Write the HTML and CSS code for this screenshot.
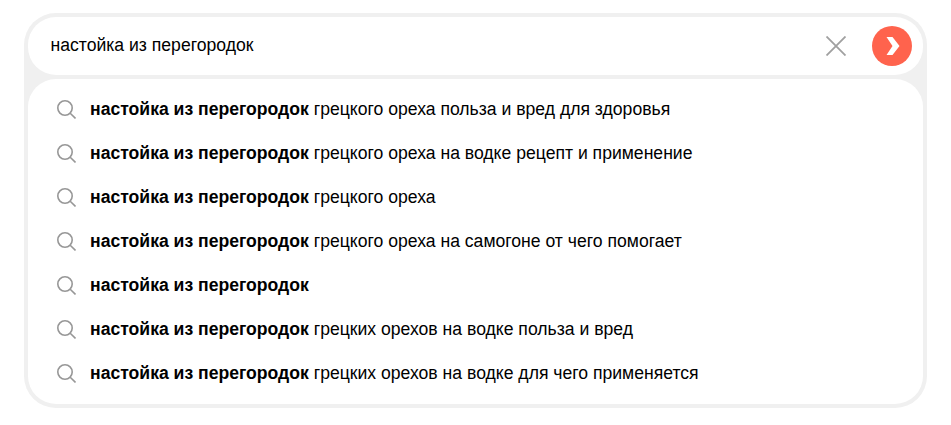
FILE: index.html
```html
<!DOCTYPE html>
<html lang="ru">
<head>
    <meta charset="UTF-8">
    <meta name="viewport" content="width=device-width, initial-scale=1.0">
    <title>Поиск</title>
    <link rel="stylesheet" href="styles.css">
</head>
<body>
    <div class="search-box">
        <div class="search-bar">
            <span class="query">настойка из перегородок</span>
            <svg class="clear-icon" width="20" height="20" viewBox="0 0 20 20">
                <path d="M0.5 0.5L19.5 19.5M19.5 0.5L0.5 19.5" stroke="#a0a0a0" stroke-width="1.8" fill="none"/>
            </svg>
            <div class="go-btn">
                <svg width="14" height="18" viewBox="0 0 14 18">
                    <path d="M0.5 0H6.5L13.5 9L6.5 18H0.5L6.5 9Z" fill="#fff"/>
                </svg>
            </div>
        </div>

        <!-- подсказки -->
        <ul class="suggest">
            <li class="suggest-row">
                <svg class="loupe" width="20" height="20" viewBox="0 0 20 20"><circle cx="9" cy="9" r="7.2"/><path d="M14.2 14.2L19.5 19.5"/></svg>
                <span><b>настойка из перегородок</b> грецкого ореха польза и вред для здоровья</span>
            </li>
            <li class="suggest-row">
                <svg class="loupe" width="20" height="20" viewBox="0 0 20 20"><circle cx="9" cy="9" r="7.2"/><path d="M14.2 14.2L19.5 19.5"/></svg>
                <span><b>настойка из перегородок</b> грецкого ореха на водке рецепт и применение</span>
            </li>
            <li class="suggest-row">
                <svg class="loupe" width="20" height="20" viewBox="0 0 20 20"><circle cx="9" cy="9" r="7.2"/><path d="M14.2 14.2L19.5 19.5"/></svg>
                <span><b>настойка из перегородок</b> грецкого ореха</span>
            </li>
            <li class="suggest-row">
                <svg class="loupe" width="20" height="20" viewBox="0 0 20 20"><circle cx="9" cy="9" r="7.2"/><path d="M14.2 14.2L19.5 19.5"/></svg>
                <span><b>настойка из перегородок</b> грецкого ореха на самогоне от чего помогает</span>
            </li>
            <li class="suggest-row">
                <svg class="loupe" width="20" height="20" viewBox="0 0 20 20"><circle cx="9" cy="9" r="7.2"/><path d="M14.2 14.2L19.5 19.5"/></svg>
                <span><b>настойка из перегородок</b></span>
            </li>
            <li class="suggest-row">
                <svg class="loupe" width="20" height="20" viewBox="0 0 20 20"><circle cx="9" cy="9" r="7.2"/><path d="M14.2 14.2L19.5 19.5"/></svg>
                <span><b>настойка из перегородок</b> грецких орехов на водке польза и вред</span>
            </li>
            <li class="suggest-row">
                <svg class="loupe" width="20" height="20" viewBox="0 0 20 20"><circle cx="9" cy="9" r="7.2"/><path d="M14.2 14.2L19.5 19.5"/></svg>
                <span><b>настойка из перегородок</b> грецких орехов на водке для чего применяется</span>
            </li>
        </ul>
    </div>
</body>
</html>
```

FILE: styles.css
```css
body {
    margin: 0;
    background: #fff;
    font-family: "Liberation Sans", Arial, sans-serif;
    font-size: 17.6px;
    color: #000;
}
.search-box {
    width: 903px;
    height: 395px;
    margin: 13px 0 0 24px;
    padding: 4px;
    box-sizing: border-box;
    background: #f0f0f0;
    border-radius: 32px;
    display: flex;
    flex-direction: column;
    gap: 4px;
}
.search-bar {
    height: 58px;
    flex: none;
    background: #fff;
    border-radius: 28px;
    display: flex;
    align-items: center;
    padding: 0 11px 0 22.5px;
}
.query {
    flex: 1;
    padding-bottom: 2px;
}
.clear-icon {
    margin-right: 26px;
}
.go-btn {
    width: 40px;
    height: 40px;
    box-sizing: border-box;
    padding-left: 2px;
    border-radius: 50%;
    background: #ff634d;
    display: flex;
    align-items: center;
    justify-content: center;
}
.suggest {
    flex: 1;
    margin: 0;
    padding: 8px 0 0 28px;
    list-style: none;
    background: #fff;
    border-radius: 28px;
}
.suggest-row {
    height: 44px;
    display: flex;
    align-items: center;
    gap: 14px;
}
.loupe {
    flex: none;
    fill: none;
    stroke: #979797;
    stroke-width: 1.6;
}
b {
    font-weight: bold;
}
```
